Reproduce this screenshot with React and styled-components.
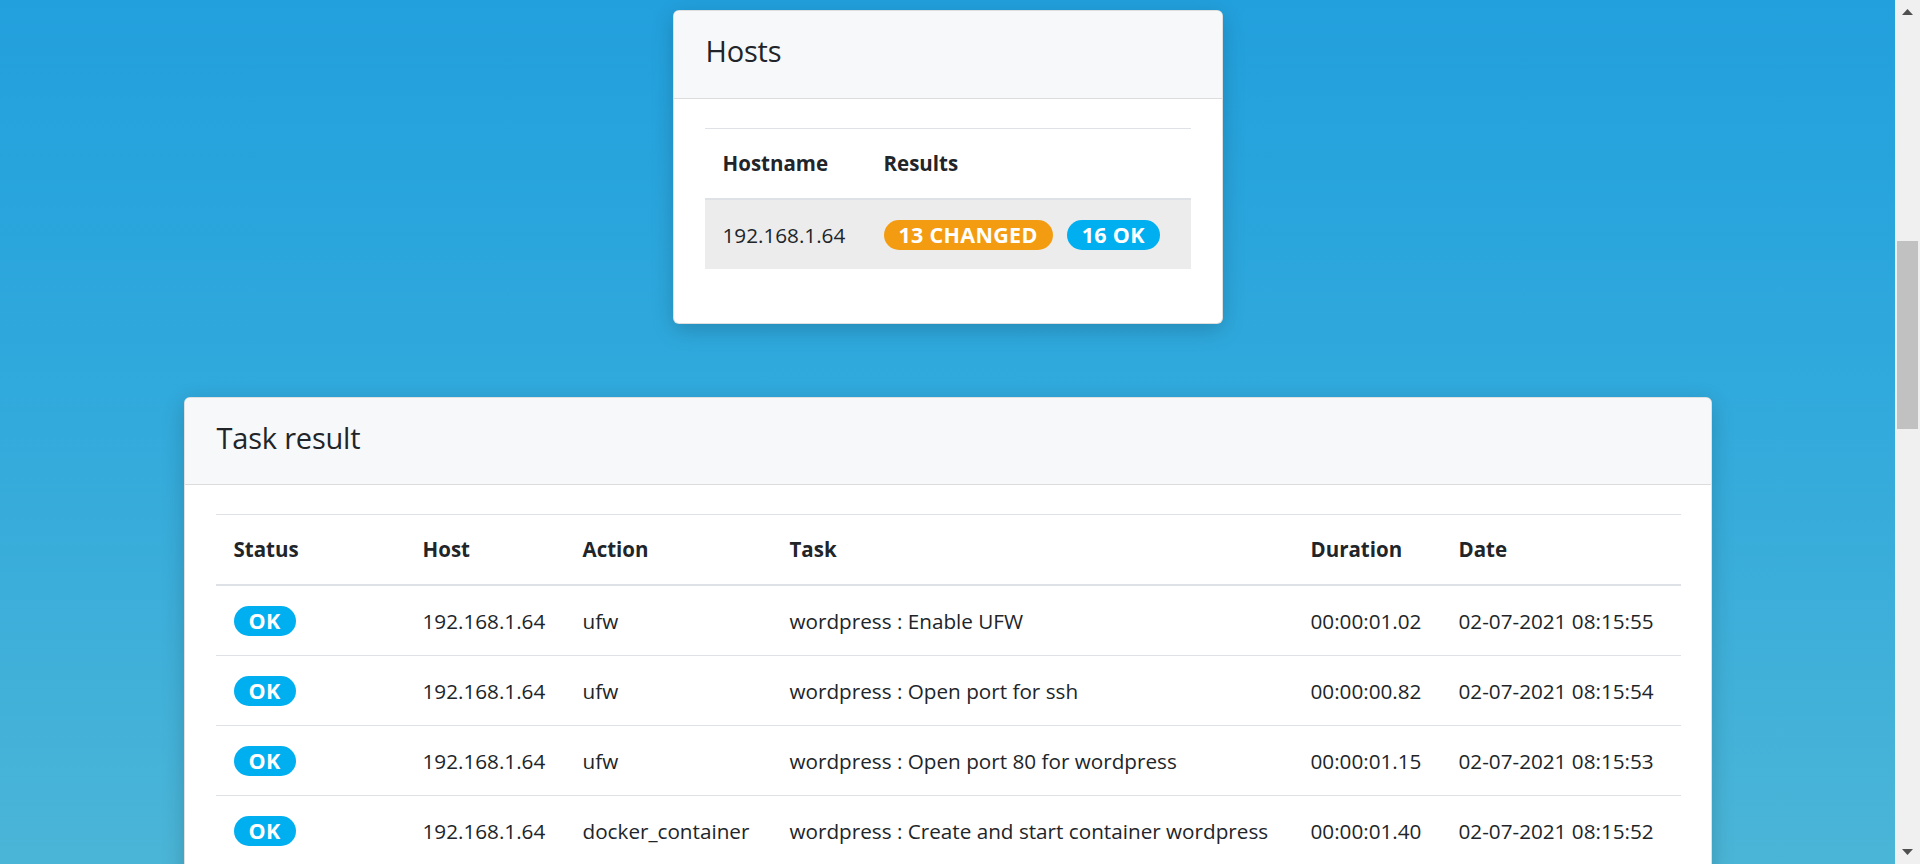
import React from "react";
import styled, { createGlobalStyle } from "styled-components";

const GlobalStyle = createGlobalStyle`
    html, body {
        margin: 0;
        padding: 0;
        height: 864px;
        overflow: hidden;
    }
    body {
        font-family: "Segoe UI", "Open Sans", "Noto Sans", sans-serif;
        color: #212529;
    }
`;

const hosts = [
    { name: "192.168.1.64", changed: 13, ok: 16 },
];

const tasks = [
    { host: "192.168.1.64", action: "ufw", task: "wordpress : Enable UFW", duration: "00:00:01.02", date: "02-07-2021 08:15:55" },
    { host: "192.168.1.64", action: "ufw", task: "wordpress : Open port for ssh", duration: "00:00:00.82", date: "02-07-2021 08:15:54" },
    { host: "192.168.1.64", action: "ufw", task: "wordpress : Open port 80 for wordpress", duration: "00:00:01.15", date: "02-07-2021 08:15:53" },
    { host: "192.168.1.64", action: "docker_container", task: "wordpress : Create and start container wordpress", duration: "00:00:01.40", date: "02-07-2021 08:15:52" },
];

const taskColumns = [
    { label: "Status", width: 189 },
    { label: "Host", width: 160 },
    { label: "Action", width: 207 },
    { label: "Task", width: 521 },
    { label: "Duration", width: 148 },
    { label: "Date", width: 240 },
];

const Arrow = ({ down }) => (
    <svg width="11" height="6" viewBox="0 0 11 6">
        <path d={down ? "M0 0 H11 L5.5 6 Z" : "M0 6 H11 L5.5 0 Z"} fill="#505050" />
    </svg>
);

const App = () => {
    return (
        <Page>
            <GlobalStyle />
            <Viewport>
                <Card width={550}>
                    <CardHeader>
                        <CardTitle>Hosts</CardTitle>
                    </CardHeader>
                    <CardBody>
                        <Table>
                            <thead>
                                <tr>
                                    <Th width={161}>Hostname</Th>
                                    <Th>Results</Th>
                                </tr>
                            </thead>
                            <tbody>
                                {hosts.map((h) => (
                                    <Tr key={h.name} active>
                                        <Td>{h.name}</Td>
                                        <Td>
                                            <Badges>
                                                <Badge color="#f39c12">{h.changed} CHANGED</Badge>
                                                <Badge color="#00aff0">{h.ok} OK</Badge>
                                            </Badges>
                                        </Td>
                                    </Tr>
                                ))}
                            </tbody>
                        </Table>
                    </CardBody>
                </Card>

                <Card width={1528}>
                    <CardHeader>
                        <CardTitle>Task result</CardTitle>
                    </CardHeader>
                    <CardBody>
                        <Table>
                            <thead>
                                <tr>
                                    {taskColumns.map((c) => (
                                        <Th key={c.label} width={c.width}>{c.label}</Th>
                                    ))}
                                </tr>
                            </thead>
                            <tbody>
                                {tasks.map((t, i) => (
                                    <Tr key={i}>
                                        <Td><Badge color="#00aff0">OK</Badge></Td>
                                        <Td>{t.host}</Td>
                                        <Td>{t.action}</Td>
                                        <Td>{t.task}</Td>
                                        <Td>{t.duration}</Td>
                                        <Td>{t.date}</Td>
                                    </Tr>
                                ))}
                            </tbody>
                        </Table>
                    </CardBody>
                </Card>
            </Viewport>
            <ScrollBar>
                <ScrollButton><Arrow /></ScrollButton>
                <ScrollTrack>
                    <ScrollThumb />
                </ScrollTrack>
                <ScrollButton><Arrow down /></ScrollButton>
            </ScrollBar>
        </Page>
    );
};

export default App;

const Page = styled.div`
    display: flex;
    width: 1920px;
    height: 864px;
    overflow: hidden;
`;

const Viewport = styled.div`
    flex: 1;
    display: flex;
    flex-direction: column;
    align-items: center;
    gap: 73px;
    padding-top: 10px;
    background: linear-gradient(180deg, #22a0dd 0%, #30a9dc 45%, #4bb5d7 100%);
    overflow: hidden;
`;

const Card = styled.div`
    flex-shrink: 0;
    width: ${props => props.width}px;
    box-sizing: border-box;
    background: #fff;
    border: 1px solid rgba(0, 0, 0, 0.125);
    border-radius: 6px;
    box-shadow: 0 6px 22px rgba(0, 0, 0, 0.18);
    overflow: hidden;
`;

const CardHeader = styled.div`
    background: #f7f8f9;
    border-bottom: 1px solid #dcdcdc;
    padding: 21px 32px 28px;
`;

const CardTitle = styled.h4`
    margin: 0;
    font-size: 29px;
    font-weight: 400;
    line-height: 1.3;
    letter-spacing: -0.2px;
`;

const CardBody = styled.div`
    padding: 29px 31px 34px;
`;

const Table = styled.table`
    width: 100%;
    border-collapse: collapse;
    margin-bottom: 20px;
    table-layout: fixed;
`;

const Th = styled.th`
    box-sizing: border-box;
    width: ${props => (props.width ? `${props.width}px` : "auto")};
    text-align: left;
    font-size: 20.5px;
    font-weight: 700;
    line-height: 30px;
    padding: 19px 18px 20px;
    border-top: 1px solid #dee2e6;
    border-bottom: 2px solid #dee2e6;
    white-space: nowrap;
`;

const Tr = styled.tr`
    background: ${props => (props.active ? "#ececec" : "transparent")};
    & + & td {
        border-top: 1px solid #dee2e6;
    }
`;

const Td = styled.td`
    box-sizing: border-box;
    font-size: 20.7px;
    line-height: 30px;
    padding: 20px 18px 19px;
    white-space: nowrap;
    vertical-align: middle;
`;

const Badges = styled.div`
    display: flex;
    gap: 14px;
`;

const Badge = styled.span`
    display: inline-block;
    background: ${props => props.color};
    color: #fff;
    font-size: 21.5px;
    font-weight: 700;
    line-height: 30px;
    letter-spacing: 0.3px;
    padding: 0 15px;
    border-radius: 16px;
    white-space: nowrap;
`;

const ScrollBar = styled.div`
    width: 25px;
    flex-shrink: 0;
    display: flex;
    flex-direction: column;
    background: #f0f0f0;
`;

const ScrollButton = styled.div`
    height: 24px;
    display: flex;
    align-items: center;
    justify-content: center;
`;

const ScrollTrack = styled.div`
    flex: 1;
    padding: 0 2px;
`;

const ScrollThumb = styled.div`
    margin-top: 217px;
    height: 188px;
    background: #c1c1c1;
`;
